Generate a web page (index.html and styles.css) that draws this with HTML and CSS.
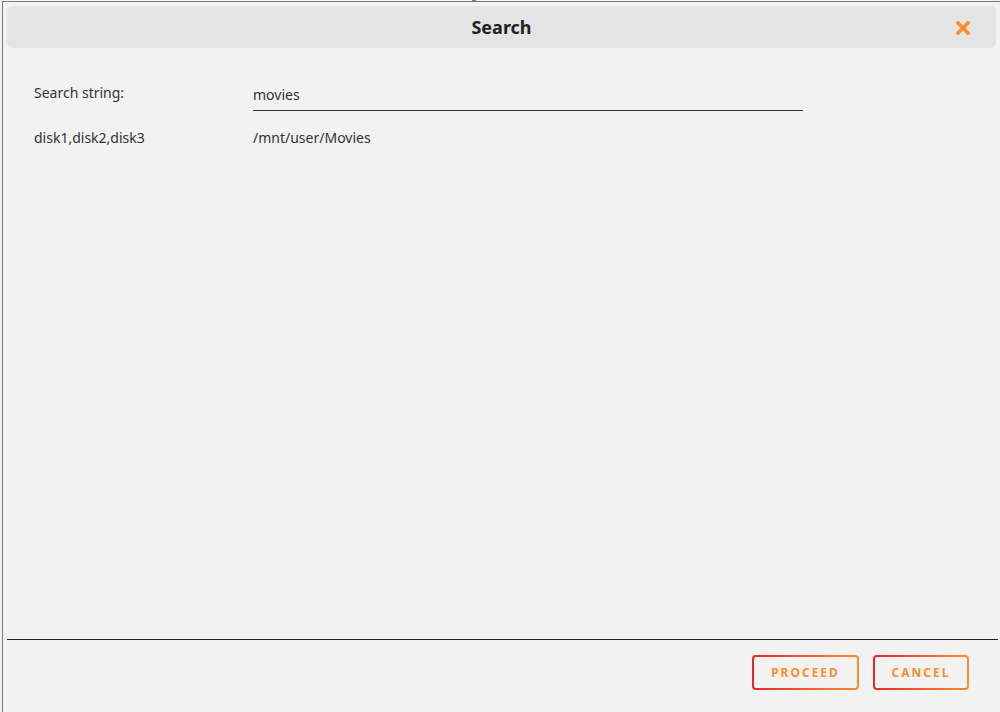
FILE: index.html
```html
<!DOCTYPE html>
<html lang="en">
<head>
    <meta charset="UTF-8">
    <meta name="viewport" content="width=device-width, initial-scale=1.0">
    <title>Search</title>
    <link rel="stylesheet" href="styles.css">
</head>
<body>
    <div class="dialog">
        <span class="tick"></span>
        <div class="dialog-title">
            <span class="title">Search</span>
            <button class="close" aria-label="Close">
                <svg width="14" height="14" viewBox="0 0 14 14">
                    <path d="M2 2 L12 12 M12 2 L2 12" stroke="#ff8c2f" stroke-width="3.6" stroke-linecap="square"/>
                </svg>
            </button>
        </div>

        <div class="dialog-content">
            <div class="row">
                <label for="search_string">Search string:</label>
                <input type="text" id="search_string" value="movies">
            </div>
            <div class="row">
                <span class="label">disk1,disk2,disk3</span>
                <span class="value">/mnt/user/Movies</span>
            </div>
        </div>

        <div class="dialog-buttons">
            <button class="btn proceed">Proceed</button>
            <button class="btn cancel">Cancel</button>
        </div>
    </div>
</body>
</html>
```

FILE: styles.css
```css
html, body {
    margin: 0;
    padding: 0;
    height: 100%;
}

body {
    font-family: 'Noto Sans', 'Liberation Sans', sans-serif;
    background-color: #f2f2f2;
    color: #333;
    overflow: hidden;
}

.dialog {
    position: relative;
    box-sizing: border-box;
    margin: 1px 0 0 2px;
    height: 711px;
    border-top: 1px solid #7a7a7a;
    border-left: 1px solid #7a7a7a;
    background: #f2f2f2;
    display: flex;
    flex-direction: column;
}

.tick {
    position: absolute;
    top: -2px;
    left: 469px;
    width: 4px;
    height: 2px;
    background: #777;
}

.dialog-title {
    position: relative;
    margin: 4px 4px 0 4px;
    height: 42px;
    background: #e4e4e4;
    border-radius: 5px;
    display: flex;
    align-items: center;
    justify-content: center;
}

.title {
    font-size: 18px;
    font-weight: bold;
    color: #222;
}

.close {
    position: absolute;
    right: 26px;
    top: 15px;
    padding: 0;
    border: none;
    background: none;
    width: 14px;
    height: 14px;
    cursor: pointer;
}

.close svg {
    display: block;
}

.dialog-content {
    flex: 1;
    padding: 35px 0 0 31px;
}

.row {
    display: grid;
    grid-template-columns: 219px 550px;
    align-items: start;
    font-size: 14px;
    line-height: 19px;
}

.row + .row {
    margin-top: 17px;
}

.row label, .row .label {
    color: #333;
}

.row input {
    font-family: inherit;
    font-size: 14px;
    line-height: 19px;
    color: #333;
    background: transparent;
    border: none;
    border-bottom: 1px solid #333;
    padding: 2px 0 6px 0;
    outline: none;
    width: 550px;
}

.dialog-buttons {
    margin: 0 2px 0 4px;
    border-top: 1px solid #222;
    height: 73px;
    display: flex;
    justify-content: flex-end;
    align-items: flex-start;
    gap: 14px;
    padding: 15px 29px 0 0;
    box-sizing: border-box;
}

.btn {
    height: 35px;
    padding: 0;
    font-family: inherit;
    font-size: 12px;
    font-weight: bold;
    letter-spacing: 2px;
    text-transform: uppercase;
    color: #ff8c2f;
    border: 2px solid transparent;
    border-radius: 4px;
    background:
        linear-gradient(#f2f2f2, #f2f2f2) padding-box,
        linear-gradient(90deg, #e22828, #ff8c2f) border-box;
    cursor: pointer;
}

.proceed {
    width: 107px;
}

.cancel {
    width: 96px;
}
```
